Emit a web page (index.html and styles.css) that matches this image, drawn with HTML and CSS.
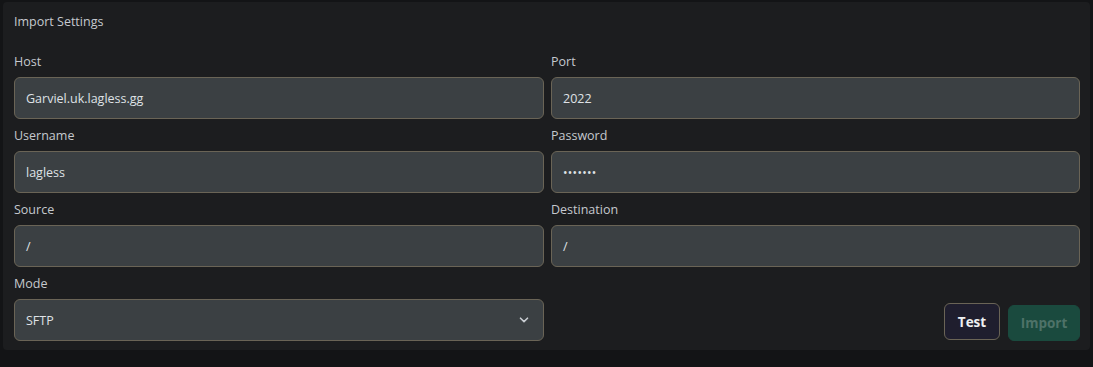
FILE: index.html
```html
<!DOCTYPE html>
<html>
<head>
<meta charset="utf-8">
<link rel="stylesheet" href="styles.css">
</head>
<body>
<div class="card">
  <div class="title">Import Settings</div>
  <div class="grid">
    <div class="field">
      <label class="label">Host</label>
      <div class="input">Garviel.uk.lagless.gg</div>
    </div>
    <div class="field">
      <label class="label">Port</label>
      <div class="input">2022</div>
    </div>
    <div class="field">
      <label class="label">Username</label>
      <div class="input">lagless</div>
    </div>
    <div class="field">
      <label class="label">Password</label>
      <div class="input dots">•••••••</div>
    </div>
    <div class="field">
      <label class="label">Source</label>
      <div class="input">/</div>
    </div>
    <div class="field">
      <label class="label">Destination</label>
      <div class="input">/</div>
    </div>
    <div class="field">
      <label class="label">Mode</label>
      <div class="input select">
        <span>SFTP</span>
        <svg class="chev" width="10" height="6" viewBox="0 0 10 6"><path d="M1.5 1.2 L5 4.6 L8.5 1.2" fill="none" stroke="#c9cdd2" stroke-width="1.6" stroke-linecap="round" stroke-linejoin="round"/></svg>
      </div>
    </div>
    <div class="actions">
      <button class="btn test">Test</button>
      <button class="btn import">Import</button>
    </div>
  </div>
</div>
</body>
</html>
```

FILE: styles.css
```css
html, body {
  margin: 0;
  padding: 0;
  background: #131416;
}
body {
  padding: 2px 3px 0 3px;
  font-family: "Open Sans", "Noto Sans", sans-serif;
  color: #c9cdd2;
}
.card {
  background: #1c1d1f;
  border-radius: 4px;
  padding: 12px 10px 10px 11px;
  height: 348px;
  box-sizing: border-box;
}
.title {
  font-size: 12.5px;
  line-height: 16px;
  color: #c5c9ce;
}
.grid {
  margin-top: 24px;
  display: grid;
  grid-template-columns: 530px 1fr;
  column-gap: 7px;
  row-gap: 9px;
}
.field {
  display: flex;
  flex-direction: column;
}
.label {
  font-size: 12.5px;
  line-height: 16px;
  margin-bottom: 7px;
  color: #c5c9ce;
}
.input {
  height: 42px;
  box-sizing: border-box;
  background: #3b4043;
  border: 1px solid #6a6456;
  border-radius: 6px;
  padding: 0 12px 0 11px;
  display: flex;
  align-items: center;
  font-size: 12.5px;
  color: #dfe2e6;
}
.dots {
  font-size: 12px;
  letter-spacing: 0.3px;
}
.select {
  justify-content: space-between;
}
.chev {
  margin-right: 2px;
}
.actions {
  display: flex;
  justify-content: flex-end;
  align-items: flex-end;
  gap: 8px;
}
.btn {
  font-family: "Open Sans", "Noto Sans", sans-serif;
  font-weight: 700;
  font-size: 13.5px;
  height: 37px;
  border-radius: 6px;
  padding: 0;
  cursor: pointer;
}
.test {
  background: #1f1e2e;
  border: 1px solid #6a6456;
  color: #eef0f2;
  width: 56px;
  margin-bottom: 1px;
}
.import {
  background: #1a4a3e;
  border: 1px solid #1a4a3e;
  color: #4e7268;
  width: 72px;
  height: 36px;
}
```
